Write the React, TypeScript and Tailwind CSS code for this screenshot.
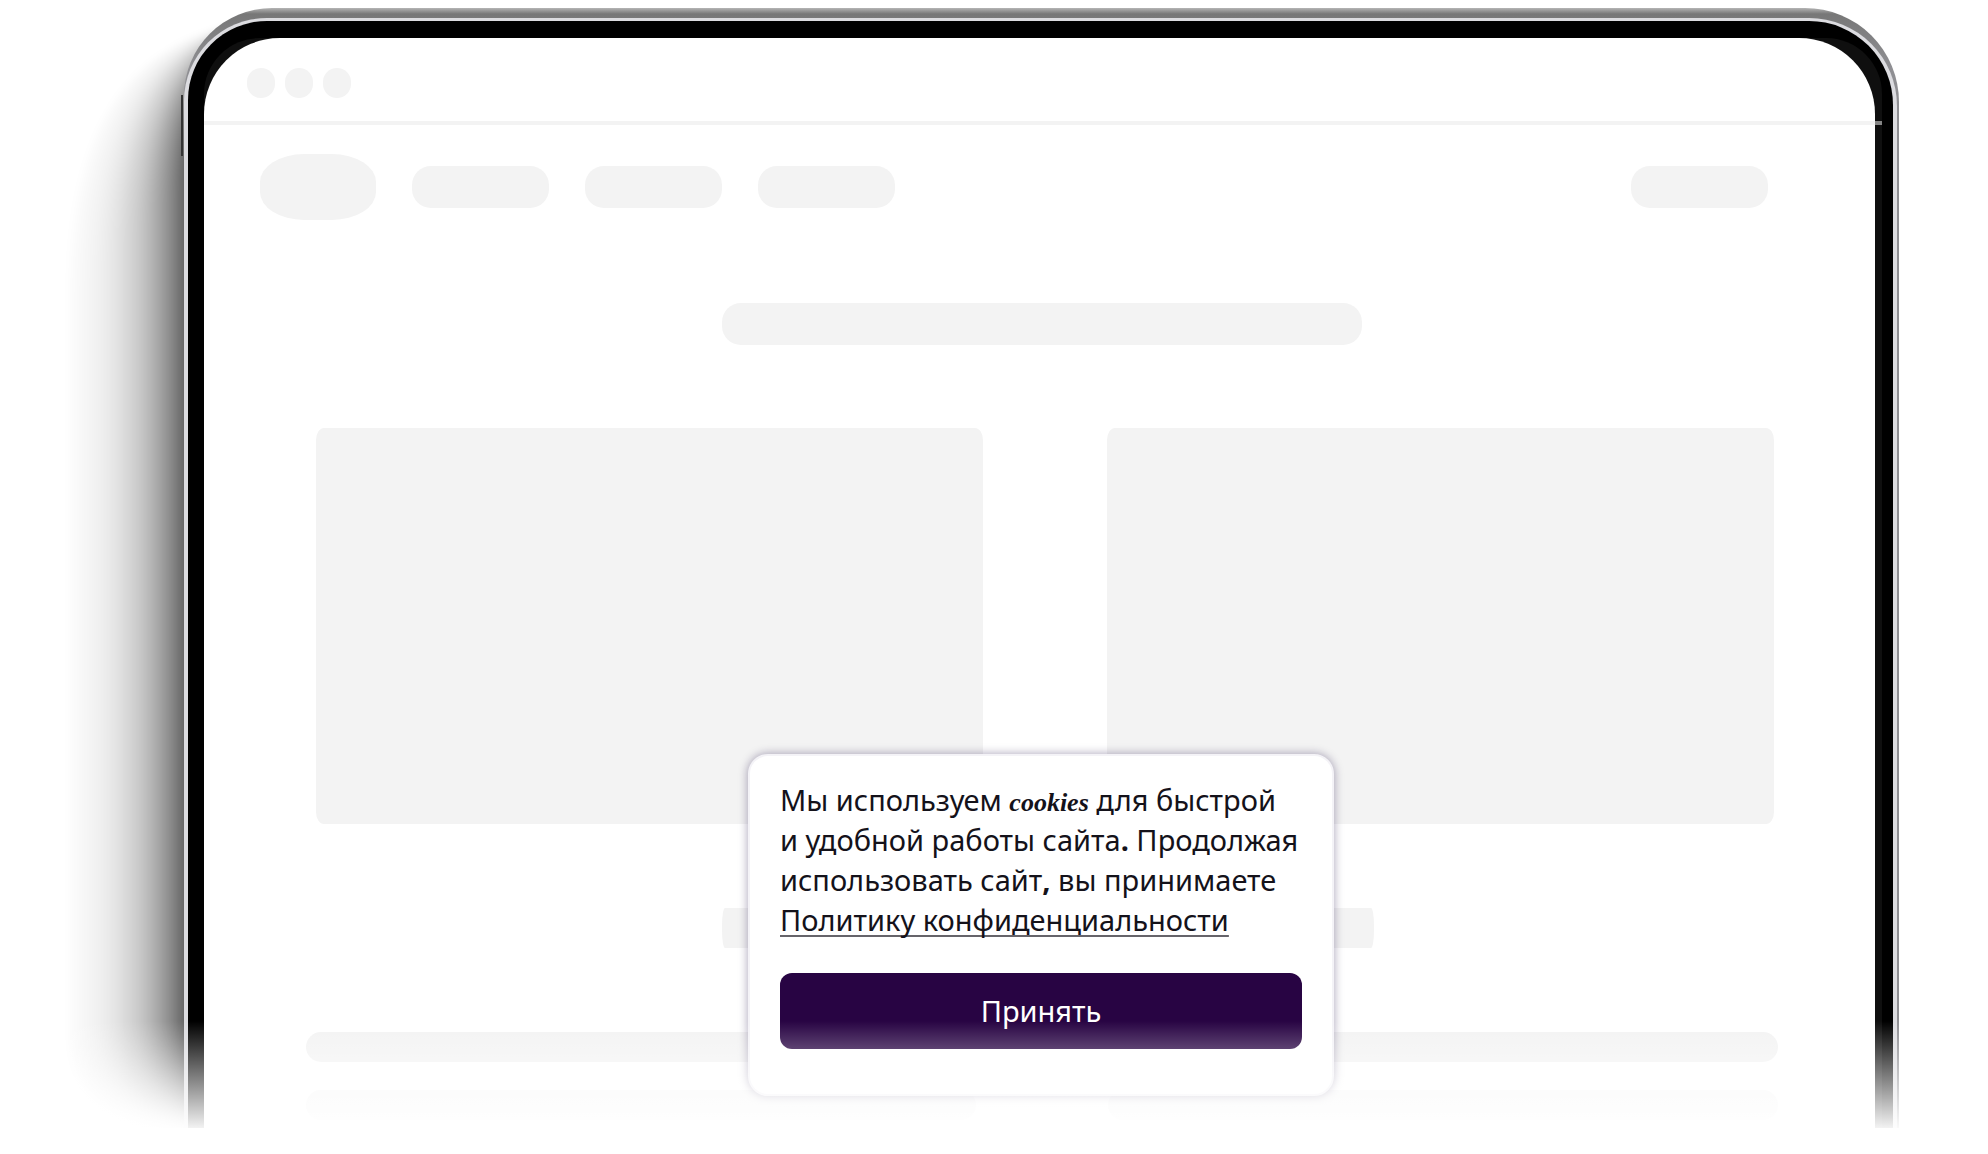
const bands = Array.from({ length: 24 }, (_, i) => 68 + i * 5);

function Backdrop() {
  return (
    <svg aria-hidden="true" className="pointer-events-none absolute left-0 top-0 h-[1154px] w-[300px]" viewBox="0 0 300 1154">
      <defs>
        <filter id="soft" x="-10%" y="-10%" width="120%" height="120%">
          <feGaussianBlur stdDeviation="3" />
        </filter>
      </defs>
      <g filter="url(#soft)">
        {bands.map((x, i) => (
          <path
            key={x}
            d={`M290 1150C${x + 50} 1135 ${x} 1110 ${x} 1030V${300 - i * 5}C${x} ${120 - i} ${x + 60 - i} 24 290 16V1150Z`}
            fill="#000"
            fillOpacity={0.01 + Math.pow(i / 23, 2) * 0.07 + Math.pow(i / 23, 8) * 0.06}
          />
        ))}
      </g>
    </svg>
  );
}

function Pill() {
  return <div className="h-[42px] w-[137px] rounded-[19px] bg-[#f3f3f3]" />;
}

function CookieNotice() {
  return (
    <section
      aria-label="Cookies"
      className="absolute left-[544px] right-[541px] top-[716px] h-[342px] rounded-[20px] border-2 border-[#f4f3f7] bg-white px-[30px] pt-6 shadow-[0_0_8px_1px_rgba(42,30,80,0.35)]"
    >
      <p className="whitespace-nowrap font-['Noto_Sans'] text-[29px] leading-10 text-[#14121a]">
        Мы используем <b className="font-['Liberation_Serif'] text-[26px] leading-none italic">cookies</b> для быстрой
        <br />и удобной работы сайта<b className="leading-none">.</b> Продолжая
        <br />
        использовать сайт<b className="leading-none">,</b> вы принимаете
        <br />
        <a
          href="#privacy"
          className="underline decoration-[#66646a] decoration-2 underline-offset-4 [text-decoration-skip-ink:none]"
        >
          Политику конфиденциальности
        </a>
      </p>
      <button
        type="button"
        className="mt-[33px] h-[76px] w-full rounded-xl bg-[#280443] font-['Noto_Sans'] text-[29px] text-white"
      >
        Принять
      </button>
    </section>
  );
}

export default function App() {
  return (
    <main className="relative h-screen min-h-[1154px] overflow-hidden bg-white pl-[184px] pr-[89px] pt-2">
      <Backdrop />
      <div className="absolute left-[181px] top-[95px] h-[61px] w-[2px] bg-[#333]" />
      <div className="relative rounded-tl-[88px] rounded-tr-[94px] bg-linear-to-b from-[#b5b5b5] via-[#777] via-[6px] to-[#8f8f93] to-[60px] pr-[2px] pt-[10px]">
        <div className="rounded-tl-[83px] rounded-tr-[88px] bg-[#dcdce0] pl-[4px] pr-[4px] pt-[3px]">
          <div className="rounded-tl-[79px] rounded-tr-[84px] bg-black pl-4 pr-[11px] pt-[17px]">
            <div className="rounded-t-[56px] bg-[#0f0f0f] pr-[7px]">
              <div className="relative h-[1116px] rounded-t-[76px] bg-white">
                <div className="flex h-[87px] gap-[10px] border-b-4 border-[#f3f3f3] pl-[43px] pt-[30px]">
                  <span className="h-[30px] w-7 rounded-[14px] bg-[#f3f3f3]" />
                  <span className="h-[30px] w-7 rounded-[14px] bg-[#f3f3f3]" />
                  <span className="h-[30px] w-7 rounded-[14px] bg-[#f3f3f3]" />
                </div>
                <div className="absolute -right-[7px] top-[83px] h-1 w-[7px] bg-[#858585]" />
                <div className="mt-[29px] flex items-center gap-9 pl-14 pr-[107px]">
                  <div className="h-[66px] w-[116px] rounded-[44px/28px] bg-[#f3f3f3]" />
                  <Pill />
                  <Pill />
                  <Pill />
                  <div className="ml-auto">
                    <Pill />
                  </div>
                </div>
                <div className="ml-[518px] mr-[513px] mt-[83px] h-[42px] rounded-[19px] bg-[#f3f3f3]" />
                <div className="ml-[112px] mr-[101px] mt-[83px] grid grid-cols-2 gap-[124px]">
                  <div className="h-[396px] rounded-[8px/12px] bg-[#f3f3f3]" />
                  <div className="h-[396px] rounded-[8px/12px] bg-[#f3f3f3]" />
                </div>
                <div className="ml-[518px] mr-[501px] mt-[84px] h-10 rounded-[3px/18px] bg-[#f3f3f3]" />
                <div className="ml-[102px] mr-[97px] mt-[84px] h-[30px] rounded-[15px] bg-[#f3f3f3]" />
                <div className="ml-[102px] mr-[97px] mt-7 grid grid-cols-2 gap-[132px]">
                  <div className="h-[30px] rounded-[15px] bg-[#f7f7f7]" />
                  <div className="h-[30px] rounded-[15px] bg-[#f7f7f7]" />
                </div>
                <CookieNotice />
              </div>
            </div>
          </div>
        </div>
      </div>
      <div className="pointer-events-none absolute inset-x-0 top-[1021px] h-[107px] bg-linear-to-b from-white/0 to-white/95" />
      <div className="absolute inset-x-0 bottom-0 top-[1128px] bg-white" />
    </main>
  );
}
